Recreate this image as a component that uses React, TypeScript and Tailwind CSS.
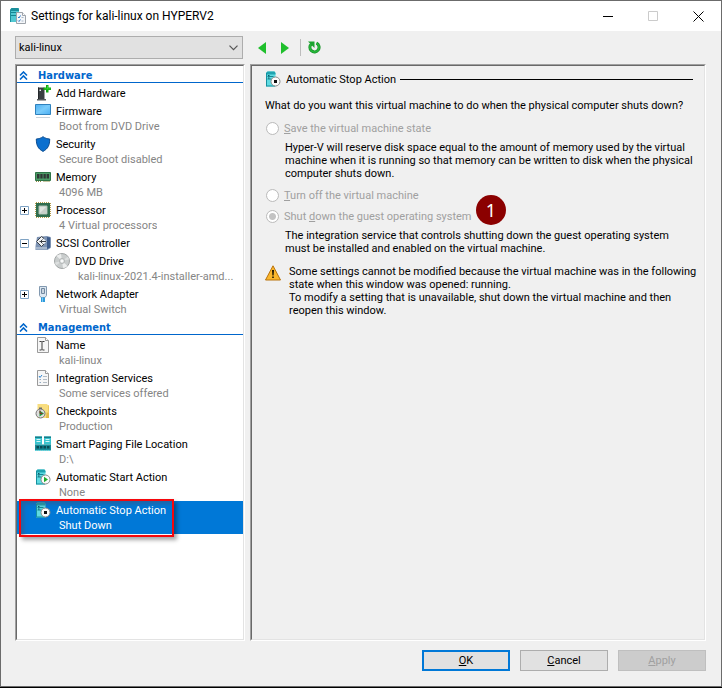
import React from 'react';

type IconProps = { className?: string };

const svgProps = { width: 16, height: 16, viewBox: '0 0 16 16', 'aria-hidden': true } as const;

function ServerShape() {
  return (
    <>
      <path d="M1 2 2.500.5h7L10.500 2v13.500H1z" fill="#5fdbe2" />
      <path d="M1 2 2.500.5h7L10.500 2v1.500H1z" fill="#1fa3b0" />
      <path d="M1 2h1v13.500H1z M1 14.500h9v1H1z" fill="#17909e" />
      <path d="M2.500 5.500h6M2.500 8h6" stroke="#168592" />
      <path d="M3 4.500h1.500M3 7h1.500" stroke="#0c5863" />
    </>
  );
}

function AppIcon() {
  return (
    <svg {...svgProps}>
      <path d="M0 2 1.500 0h7L9 2v12H0z" fill="#52c8d2" />
      <path d="M0 2 1.500 0h7L9 2v1H0z M0 2h1v12H0z" fill="#1b8e9b" />
      <path d="M1 4.500h7M1 7.500h6" stroke="#168592" />
      <path d="M6.500 4.500h6l3 3v8h-9z" fill="#f5f7fa" stroke="#9da3aa" />
      <path d="M12.500 4.500v3h3" fill="#fff" stroke="#9da3aa" />
      <path d="m8 9 1 1 1.500-2.500M8 12.500l1 1 1.500-2" fill="none" stroke="#2c78c9" />
      <path d="M11.500 9.500h2M11.500 13h2" stroke="#a9b6c6" />
    </svg>
  );
}

function AddHardwareIcon() {
  return (
    <svg {...svgProps}>
      <path d="M3 2.500h6.500V14H3z" fill="#3a3f42" />
      <path d="M3 2.500h1V14H3z" fill="#24282b" />
      <path d="M2 14h9v1.500H2z" fill="#55595c" />
      <path d="M4.500 4.500h1.500V6H4.500z" fill="#e8ecee" />
      <path d="M11 0h2.500v2.500H16V5h-2.500v2.500H11V5H8.500V2.500H11z" fill="#12a812" />
      <path d="M12 1h1v2.500h2.500v.8H9.500v-.8H12z" fill="#35d835" />
    </svg>
  );
}

function FirmwareIcon() {
  return (
    <svg {...svgProps}>
      <defs>
        <linearGradient id="screen" x1="0" y1="0" x2="1" y2="1">
          <stop offset="0" stopColor="#4fb0f2" />
          <stop offset=".5" stopColor="#7accfb" />
          <stop offset="1" stopColor="#4aaef2" />
        </linearGradient>
      </defs>
      <path d="M.5 1.500h15v10H.5z" fill="url(#screen)" stroke="#2f81bd" />
      <path d="M1 14.500h14" stroke="#c9d3db" />
    </svg>
  );
}

function SecurityIcon() {
  return (
    <svg {...svgProps}>
      <path d="M8 .7c2 1.500 4.300 2.200 6.700 2.300 0 6-1.600 9.800-6.700 12.400C2.900 12.800 1.300 9 1.300 3 3.700 2.900 6 2.200 8 .7z" fill="#0b70cf" stroke="#0a4c91" />
    </svg>
  );
}

function MemoryIcon() {
  return (
    <svg {...svgProps}>
      <path d="M.5 3.500h15v8H.5z" fill="#4c9a66" stroke="#2e7447" />
      <path d="M2 5h2.500v4.500H2zM5.300 5h2.300v4.500H5.300zM8.500 5h2.300v4.500H8.500zM11.600 5h2.400v4.500h-2.400z" fill="#2f3534" />
      <path d="M1 12.500h6M8.500 12.500h6.500" stroke="#8f8a45" strokeDasharray="1 1" />
    </svg>
  );
}

function ProcessorIcon() {
  return (
    <svg {...svgProps}>
      <path d="M.5 1v14M15.500 1v14M1 .5h14M1 15.500h14" stroke="#b49b4a" strokeDasharray="1 1" />
      <path d="M1 1h14v14H1z" fill="#2f6d4e" />
      <path d="M4 4h8v8H4z" fill="#dfe5e0" stroke="#a9bdb0" />
      <path d="m5 11 6-6v6z" fill="#c8cfc9" />
    </svg>
  );
}

function ScsiIcon() {
  return (
    <svg {...svgProps}>
      <path d="m2 2 10-1 3.500 1v11l-3 2H.5V11z" fill="#7d93b3" />
      <path d="m12 2 3.500.5v10L12 14z" fill="#3d5c8c" />
      <path d="M1 12h11v2.500H1z" fill="#a7b7cc" />
      <path d="m6.500 1.500 5 5-5 5-5-5z" fill="#f0f2f4" />
      <path d="M9 3.500 6.500 1.500l-5 5 5 5L9 9M4.500 6.500H11M7.500 4.500l-2 2 2 2" fill="none" stroke="#3a3f46" />
    </svg>
  );
}

function DvdIcon() {
  return (
    <svg {...svgProps}>
      <circle cx="8" cy="8" r="7.500" fill="#c9cdcd" stroke="#a2a6a6" />
      <path d="M8 8 2.500 3A7.200 7.200 0 0 1 7 .9zM8 8l5.500 5A7.200 7.200 0 0 1 9 15.100z" fill="#eceeee" />
      <path d="m8 8 6-4.500a7 7 0 0 1 1 3zM8 8l-6 4.500a7 7 0 0 1-1-3z" fill="#dcdfdf" />
      <circle cx="8" cy="8" r="2.500" fill="#e8eaea" stroke="#b1b5b5" />
      <circle cx="8" cy="8" r="1" fill="#fff" />
    </svg>
  );
}

function NetworkIcon() {
  return (
    <svg {...svgProps}>
      <path d="M4.500.5h7v9l-1.500 2H6l-1.500-2z" fill="#dce7f1" stroke="#8299b0" />
      <path d="M6.500 2.500h3v5h-3z" fill="#f7fafc" stroke="#7188a0" />
      <path d="M8 3v4" stroke="#9cafc1" />
      <path d="M6 11.500h4V16H6z" fill="#2f9bdc" />
      <path d="M7 11.500h1V16H7z" fill="#7cc8f2" />
    </svg>
  );
}

function PageShape() {
  return (
    <>
      <path d="M2.500.5h8l3 3v12h-11z" fill="#f6f6f6" stroke="#9a9a9a" />
      <path d="M10.500.5v3h3" fill="#fff" stroke="#9a9a9a" />
    </>
  );
}

function NameIcon() {
  return (
    <svg {...svgProps}>
      <PageShape />
      <path d="M4.500 4.500h2l.5.500.5-.500h2M7 5v7.500M4.500 13h2l.5-.5.5.5h2" fill="none" stroke="#3c3c3c" />
    </svg>
  );
}

function IntegrationIcon() {
  return (
    <svg {...svgProps}>
      <PageShape />
      <path d="m4 6 1 1.500L7 5" fill="none" stroke="#2c84d2" />
      <path d="M8 6.500h4M8 9.500h4M8 12.500h4" stroke="#b3bcc5" />
      <path d="M4.500 9h1.500v1H4.500zM4.500 12h1.500v1H4.500z" fill="#8fa9c2" />
    </svg>
  );
}

function CheckpointsIcon() {
  return (
    <svg {...svgProps}>
      <path d="M2.500 1h9L14 2.500V15H2.500z" fill="#f8dd7f" />
      <path d="M11.500 9.500H14V15h-3z" fill="#e3b94a" />
      <path d="M13 2.500h1V10h-1z" fill="#ecc75c" />
      <circle cx="5.500" cy="10.500" r="4.500" fill="#dedede" stroke="#767676" />
      <path d="M4 4.500h3v1.500H4z" fill="#6c6c6c" />
      <path d="m4.500 7.500 4.500 3-4.500 3z" fill="#1e9a3c" />
      <path d="M5 7.500v3h2.500" fill="none" stroke="#8e2a2a" />
    </svg>
  );
}

function PagingIcon() {
  return (
    <svg {...svgProps}>
      <path d="M0 .5h7v8H0zM9 .5h7v8H9z" fill="#39c3ce" />
      <path d="M0 .5h7V2H0zM9 .5h7V2H9z" fill="#167e8b" />
      <path d="M1.500 3.500h4M1.500 5.500h4M10.500 3.500h4M10.500 5.500h4" stroke="#d4f6f8" />
      <path d="M0 8.500h16v6H0z" fill="#168a97" />
      <path d="M1.500 10h2.500v2.500H1.500zM5 10h2.500v2.500H5zM8.500 10H11v2.500H8.500zM12 10h2.500v2.500H12z" fill="#0a4a54" />
      <path d="M0 14.500h16" stroke="#4fd5df" strokeDasharray="1 1" />
    </svg>
  );
}

function StartActionIcon() {
  return (
    <svg {...svgProps}>
      <ServerShape />
      <circle cx="10.500" cy="10.500" r="4.500" fill="#fbfbfb" stroke="#8a8a8a" />
      <path d="m9 7.700 4 2.800-4 2.800z" fill="#1fae2d" />
    </svg>
  );
}

function StopActionIcon() {
  return (
    <svg {...svgProps}>
      <ServerShape />
      <circle cx="10.500" cy="10.500" r="4.500" fill="#fbfbfb" stroke="#8a8a8a" />
      <path d="M9 9h3v3H9z" fill="#111" />
    </svg>
  );
}

function WarningIcon() {
  return (
    <svg {...svgProps} className="shrink-0">
      <path d="M8 .8 15.500 15H.5z" fill="#fbb72c" stroke="#b8720d" strokeLinejoin="round" />
      <path d="M7 5h2l-.4 5.500H7.400zM7.200 11.500h1.600V13H7.200z" fill="#1c1400" />
    </svg>
  );
}

function DoubleChevron() {
  return (
    <svg width="9" height="9" viewBox="0 0 9 9" aria-hidden="true" className="shrink-0">
      <path d="m1 4.500 3.500-3.500L8 4.500M1 8.500 4.500 5 8 8.500" fill="none" stroke="#0066cc" strokeWidth="1.600" />
    </svg>
  );
}

type Item = {
  label: string;
  detail?: string;
  icon: (p: IconProps) => React.ReactElement;
  toggle?: 'plus' | 'minus';
  nested?: boolean;
  selected?: boolean;
};

const hardware: Item[] = [
  { label: 'Add Hardware', icon: AddHardwareIcon },
  { label: 'Firmware', detail: 'Boot from DVD Drive', icon: FirmwareIcon },
  { label: 'Security', detail: 'Secure Boot disabled', icon: SecurityIcon },
  { label: 'Memory', detail: '4096 MB', icon: MemoryIcon },
  { label: 'Processor', detail: '4 Virtual processors', icon: ProcessorIcon, toggle: 'plus' },
  { label: 'SCSI Controller', icon: ScsiIcon, toggle: 'minus' },
  { label: 'DVD Drive', detail: 'kali-linux-2021.4-installer-amd...', icon: DvdIcon, nested: true },
  { label: 'Network Adapter', detail: 'Virtual Switch', icon: NetworkIcon, toggle: 'plus' },
];

const management: Item[] = [
  { label: 'Name', detail: 'kali-linux', icon: NameIcon },
  { label: 'Integration Services', detail: 'Some services offered', icon: IntegrationIcon },
  { label: 'Checkpoints', detail: 'Production', icon: CheckpointsIcon },
  { label: 'Smart Paging File Location', detail: 'D:\\', icon: PagingIcon },
  { label: 'Automatic Start Action', detail: 'None', icon: StartActionIcon },
  { label: 'Automatic Stop Action', detail: 'Shut Down', icon: StopActionIcon, selected: true },
];

function Row({ item }: { item: Item }) {
  const Icon = item.icon;
  return (
    <li className={`relative flex items-start ${item.selected ? 'bg-[#0078d7] text-white' : ''}`}>
      <div className="flex h-[18px] w-[18px] shrink-0 items-center pl-[3px]">
        {item.toggle && (
          <button
            type="button"
            aria-label={`${item.toggle === 'plus' ? 'Expand' : 'Collapse'} ${item.label}`}
            className="h-[9px] w-[9px]"
          >
            <svg width="9" height="9" viewBox="0 0 9 9" className="block">
              <path d="M.5.5h8v8h-8z" fill="#fff" stroke="#7fa3c4" />
              <path d={item.toggle === 'plus' ? 'M2 4.500h5M4.500 2v5' : 'M2 4.500h5'} stroke="#000" />
            </svg>
          </button>
        )}
      </div>
      <button type="button" className={`flex min-w-0 flex-1 items-start gap-[5px] text-left ${item.nested ? 'pl-[19px]' : ''}`}>
        <span className="shrink-0 pt-px">
          <Icon />
        </span>
        <span className="min-w-0">
          <span className="block pt-[2px] leading-4">{item.label}</span>
          {item.detail && (
            <span className={`block truncate pb-[2px] pl-[3px] leading-[13px] ${item.selected ? '' : 'text-[#858585]'}`}>
              {item.detail}
            </span>
          )}
        </span>
      </button>
      {item.selected && (
        <div className="pointer-events-none absolute top-[-2px] left-[2px] h-[38px] w-[155px] border-2 border-[#f5070c] shadow-[3px_3px_4px_rgba(0,0,0,0.35),inset_3px_3px_4px_rgba(70,80,110,0.5)]" />
      )}
    </li>
  );
}

function Section({ title, items }: { title: string; items: Item[] }) {
  return (
    <section>
      <h2 className="mb-px flex h-[17px] items-center gap-[10px] border-b border-[#0066cc] pt-[2px] pl-[2px] font-['DejaVu_Sans_Condensed','DejaVu_Sans',sans-serif] text-[11px] font-bold text-[#0066cc]">
        <DoubleChevron />
        {title}
      </h2>
      <ul>
        {items.map((item) => (
          <Row key={item.label} item={item} />
        ))}
      </ul>
    </section>
  );
}

function Sunken({ className, children }: { className: string; children: React.ReactNode }) {
  return (
    <div className={`flex border border-t-[#a0a0a0] border-r-white border-b-white border-l-[#a0a0a0] ${className}`}>
      <div className="min-w-0 flex-1 border border-t-[#696969] border-r-[#e3e3e3] border-b-[#e3e3e3] border-l-[#696969]">
        {children}
      </div>
    </div>
  );
}

function Option({ id, checked, children }: { id: string; checked?: boolean; children: React.ReactNode }) {
  return (
    <div className="flex h-[13px] items-center gap-[5px] pl-px">
      <input
        id={id}
        name="stop-action"
        type="radio"
        disabled
        defaultChecked={checked}
        className="m-0 h-[13px] w-[13px] shrink-0 appearance-none rounded-full border border-[#bcbcbc] bg-white bg-clip-padding checked:bg-[radial-gradient(circle,#c3c3c3_3px,#fff_4px)]"
      />
      <label htmlFor={id} className="text-[#a0a0a0]">
        {children}
      </label>
    </div>
  );
}

const buttonBase = 'h-[21px] w-[88px] border leading-[19px]';

export default function App() {
  return (
    <div className="flex min-h-screen flex-col border-b border-black bg-[#f0f0f0] font-[Roboto,'Noto_Sans',sans-serif] text-[11px] leading-[13px] text-black">
      <div className="flex flex-1 flex-col border border-[#6b6b6b]">
        <header className="flex h-[30px] items-center bg-white pl-[9px]">
          <AppIcon />
          <h1 className="flex-1 pl-[5px] text-[12px]">Settings for kali-linux on HYPERV2</h1>
          <button type="button" aria-label="Minimize" className="flex h-full w-[45px] items-center justify-center">
            <svg width="10" height="10" viewBox="0 0 10 10">
              <path d="M0 5.500h10" stroke="#000" />
            </svg>
          </button>
          <button type="button" aria-label="Maximize" disabled className="flex h-full w-[45px] items-center justify-center">
            <svg width="10" height="10" viewBox="0 0 10 10">
              <path d="M.5.5h9v9h-9z" fill="none" stroke="#cbcbcb" />
            </svg>
          </button>
          <button type="button" aria-label="Close" className="flex h-full w-[46px] items-center justify-center">
            <svg width="11" height="11" viewBox="0 0 11 11">
              <path d="m.5.5 10 10M10.500.5l-10 10" stroke="#000" />
            </svg>
          </button>
        </header>

        <div className="flex flex-1 flex-col pt-[5px] pr-[15px] pb-[15px] pl-[14px]">
          <div className="flex items-center">
            <div className="relative w-[228px]">
              <select
                aria-label="Virtual machine"
                className="block h-[23px] w-full appearance-none border border-[#adadad] bg-[#e1e1e1] pl-[3px] text-[11px] text-black"
              >
                <option>kali-linux</option>
              </select>
              <svg width="9" height="6" viewBox="0 0 9 6" aria-hidden="true" className="pointer-events-none absolute top-[9px] right-[5px]">
                <path d="m.5.7 4 4 4-4" fill="none" stroke="#555" strokeWidth="1.200" />
              </svg>
            </div>
            <div className="flex items-center pl-[15px]">
              <button type="button" aria-label="Back">
                <svg width="8" height="12" viewBox="0 0 8 12" className="block">
                  <path d="M0 6 8 0v12z" fill="#1fbf2c" />
                </svg>
              </button>
              <button type="button" aria-label="Forward" className="pl-[15px]">
                <svg width="8" height="12" viewBox="0 0 8 12" className="block">
                  <path d="M8 6 0 0v12z" fill="#1fbf2c" />
                </svg>
              </button>
              <div className="ml-[11px] h-[17px] w-px bg-[#bdbdbd]" />
              <button type="button" aria-label="Refresh" className="pl-[7px]">
                <svg width="13" height="13" viewBox="0 0 13 13" className="block">
                  <path d="M8.500 2.200a4.600 4.600 0 1 1-5 .6" fill="none" stroke="#18942a" strokeWidth="3" />
                  <path d="M8.500 2.200a4.600 4.600 0 1 1-5 .6" fill="none" stroke="#27b93a" strokeWidth="1.500" />
                  <path d="M0 .5h6.500V7z" fill="#1ba32f" />
                </svg>
              </button>
            </div>
          </div>

          <main className="mt-[5px] flex flex-1 gap-[5px]">
            <Sunken className="w-[230px] shrink-0 bg-white">
              <nav aria-label="Settings">
                <Section title="Hardware" items={hardware} />
                <Section title="Management" items={management} />
              </nav>
            </Sunken>

            <Sunken className="min-w-0 flex-1">
              <div className="relative flex flex-col pt-[5px] pl-[13px]">
                <div className="flex h-4 items-center pr-[11px]">
                  <StopActionIcon />
                  <h2 className="pl-[5px]">Automatic Stop Action</h2>
                  <div className="ml-1 h-px flex-1 bg-black" />
                </div>
                <fieldset className="min-w-0">
                  <legend className="pt-[12px] pb-[10px]">
                    What do you want this virtual machine to do when the physical computer shuts down?
                  </legend>
                  <Option id="save">
                    <span className="underline">S</span>ave the virtual machine state
                  </Option>
                  <p className="pt-[6px] pb-[9px] pl-5">
                    Hyper-V will reserve disk space equal to the amount of memory used by the virtual
                    <br />
                    machine when it is running so that memory can be written to disk when the physical
                    <br />
                    computer shuts down.
                  </p>
                  <Option id="turn-off">
                    <span className="underline">T</span>urn off the virtual machine
                  </Option>
                  <div className="h-2" />
                  <Option id="shut-down" checked>
                    Shut <span className="underline">d</span>own the guest operating system
                  </Option>
                  <p className="pt-[6px] pl-5">
                    The integration service that controls shutting down the guest operating system
                    <br />
                    must be installed and enabled on the virtual machine.
                  </p>
                </fieldset>
                <div className="flex gap-2 pt-[10px]">
                  <WarningIcon />
                  <p>
                    Some settings cannot be modified because the virtual machine was in the following
                    <br />
                    state when this window was opened: running.
                    <br />
                    To modify a setting that is unavailable, shut down the virtual machine and then
                    <br />
                    reopen this window.
                  </p>
                </div>
                <div className="absolute top-[129px] left-[224px] flex h-[30px] w-[30px] items-center justify-center rounded-full bg-[#8b0000] font-['Noto_Sans',sans-serif] text-[18px] text-white">
                  1
                </div>
              </div>
            </Sunken>
          </main>

          <footer className="flex justify-end gap-[10px] pt-[9px]">
            <button type="button" className="h-[21px] w-[88px] border-2 border-[#0078d7] bg-[#e1e1e1] leading-[17px]">
              <span className="underline">O</span>K
            </button>
            <button type="button" className={`${buttonBase} border-[#adadad] bg-[#e1e1e1]`}>
              <span className="underline">C</span>ancel
            </button>
            <button type="button" disabled className={`${buttonBase} border-[#bfbfbf] bg-[#cccccc] text-[#a0a0a0]`}>
              <span className="underline">A</span>pply
            </button>
          </footer>
        </div>
      </div>
    </div>
  );
}
